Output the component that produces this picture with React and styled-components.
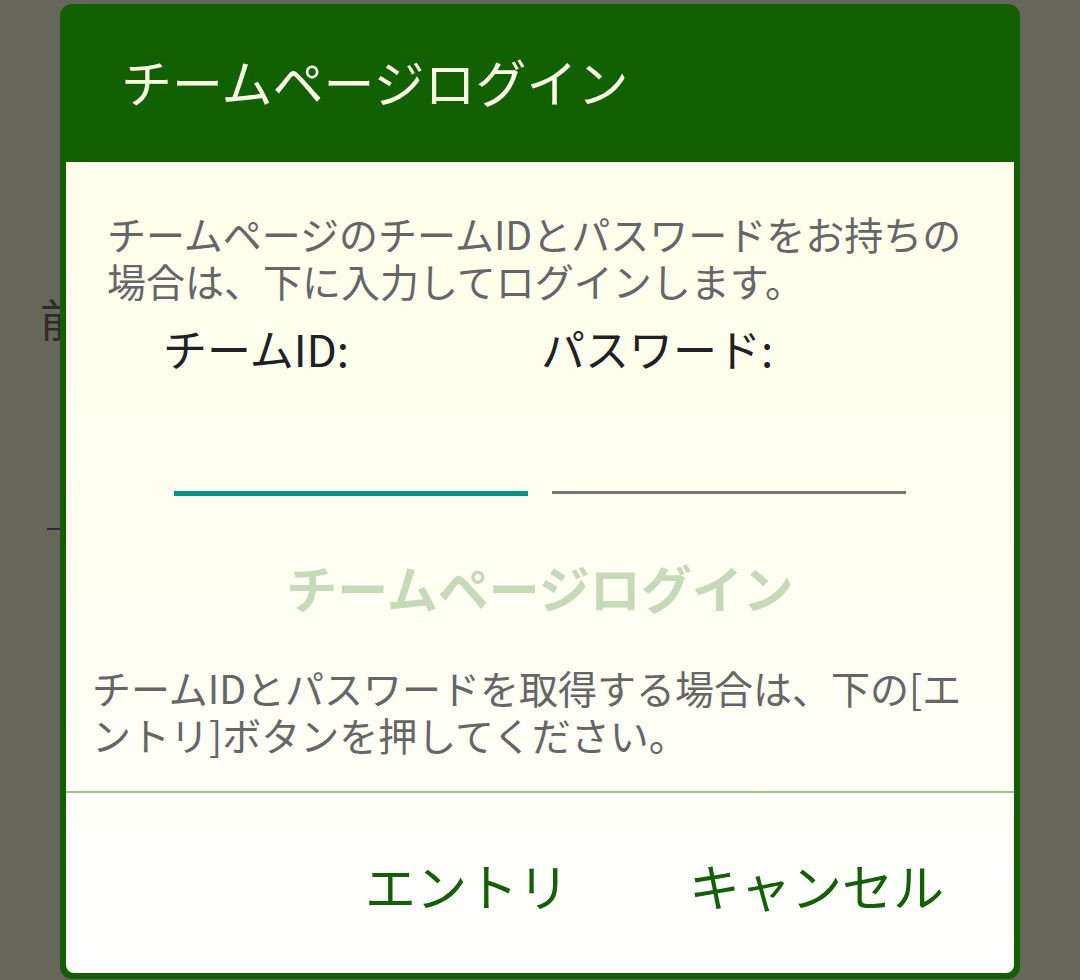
import React from "react";
import styled, { createGlobalStyle } from "styled-components";

const Global = createGlobalStyle`
  html, body {
    margin: 0;
    padding: 0;
    background: #66665a;
  }
  body {
    font-family: "Noto Sans CJK JP", "Noto Sans", sans-serif;
  }
  * { box-sizing: border-box; }
`;

const Page = styled.div`
  position: relative;
  width: 1080px;
  height: 980px;
  overflow: hidden;
  background: #66665a;
`;

const BackdropContent = styled.div`
  display: flex;
  flex-direction: column;
  padding: 288px 0 0 40px;
`;

const BackdropLabel = styled.div`
  font-size: 44px;
  line-height: 60px;
  color: #2c2c28;
`;

const BackdropField = styled.div`
  width: 60px;
  margin: 180px 0 0 7px;
  border-bottom: 2px solid #2c2c28;
`;

const Dialog = styled.div`
  position: absolute;
  left: 60px;
  top: 4px;
  width: 960px;
  display: flex;
  flex-direction: column;
  background: #116100;
  border-radius: 12px;
  padding: 0 6px 6px 6px;
`;

const Header = styled.div`
  height: 158px;
  display: flex;
  align-items: center;
  padding: 0 0 4px 55px;
`;

const Title = styled.h1`
  margin: 0;
  font-size: 51px;
  font-weight: 400;
  line-height: 60px;
  color: #fffbe4;
`;

const Body = styled.div`
  display: flex;
  flex-direction: column;
  background: linear-gradient(#ffffea, #fffff6);
  padding: 48px 0 33px 0;
`;

const Paragraph = styled.p`
  margin: ${(p) => p.$mt || 0}px 0 0 0;
  padding-left: ${(p) => p.$pl}px;
  font-size: 39px;
  line-height: 47px;
  color: #666666;
  white-space: nowrap;
`;

const Fields = styled.div`
  display: grid;
  grid-template-columns: 363px 363px;
  column-gap: 15px;
  align-items: start;
  margin-top: 18px;
  padding-left: 97px;
`;

const Field = styled.div`
  display: flex;
  flex-direction: column;
`;

const Label = styled.label`
  font-size: 44px;
  line-height: 52px;
  color: #212121;
`;

const Input = styled.input`
  box-sizing: content-box;
  display: block;
  width: 354px;
  height: 117px;
  margin-left: 11px;
  padding: 0;
  border: none;
  border-bottom: ${(p) => (p.$focused ? "5px solid #009688" : "3px solid #777770")};
  background: transparent;
  outline: none;
  font-size: 40px;
  font-family: inherit;
`;

const DisabledButton = styled.button`
  align-self: center;
  margin-top: 61px;
  height: 60px;
  padding: 0;
  border: none;
  background: transparent;
  font-family: inherit;
  font-size: 51px;
  font-weight: 700;
  line-height: 60px;
  color: #c4dab8;
`;

const Divider = styled.div`
  height: 2px;
  background: #9dc38f;
`;

const Footer = styled.div`
  height: 180px;
  display: flex;
  justify-content: flex-end;
  align-items: center;
  gap: 120px;
  padding: 4px 70px 0 0;
  background: linear-gradient(#fffffa, #ffffff);
  border-radius: 0 0 8px 8px;
`;

const ActionButton = styled.button`
  padding: 0;
  border: none;
  background: transparent;
  font-family: inherit;
  font-size: 51px;
  font-weight: 400;
  line-height: 60px;
  color: #116100;
`;

export default function App() {
  return (
    <Page>
      <Global />
      <BackdropContent>
        <BackdropLabel>前</BackdropLabel>
        <BackdropField />
      </BackdropContent>
      <Dialog>
        <Header>
          <Title>チームページログイン</Title>
        </Header>
        <Body>
          <Paragraph $pl={41}>
            チームページのチームIDとパスワードをお持ちの
            <br />
            場合は、下に入力してログインします。
          </Paragraph>
          <Fields>
            <Field>
              <Label>チームID:</Label>
              <Input $focused type="text" />
            </Field>
            <Field>
              <Label>パスワード:</Label>
              <Input type="password" />
            </Field>
          </Fields>
          <DisabledButton disabled>チームページログイン</DisabledButton>
          <Paragraph $pl={26} $mt={47}>
            チームIDとパスワードを取得する場合は、下の[エ
            <br />
            ントリ]ボタンを押してください。
          </Paragraph>
        </Body>
        <Divider />
        <Footer>
          <ActionButton>エントリ</ActionButton>
          <ActionButton>キャンセル</ActionButton>
        </Footer>
      </Dialog>
    </Page>
  );
}
